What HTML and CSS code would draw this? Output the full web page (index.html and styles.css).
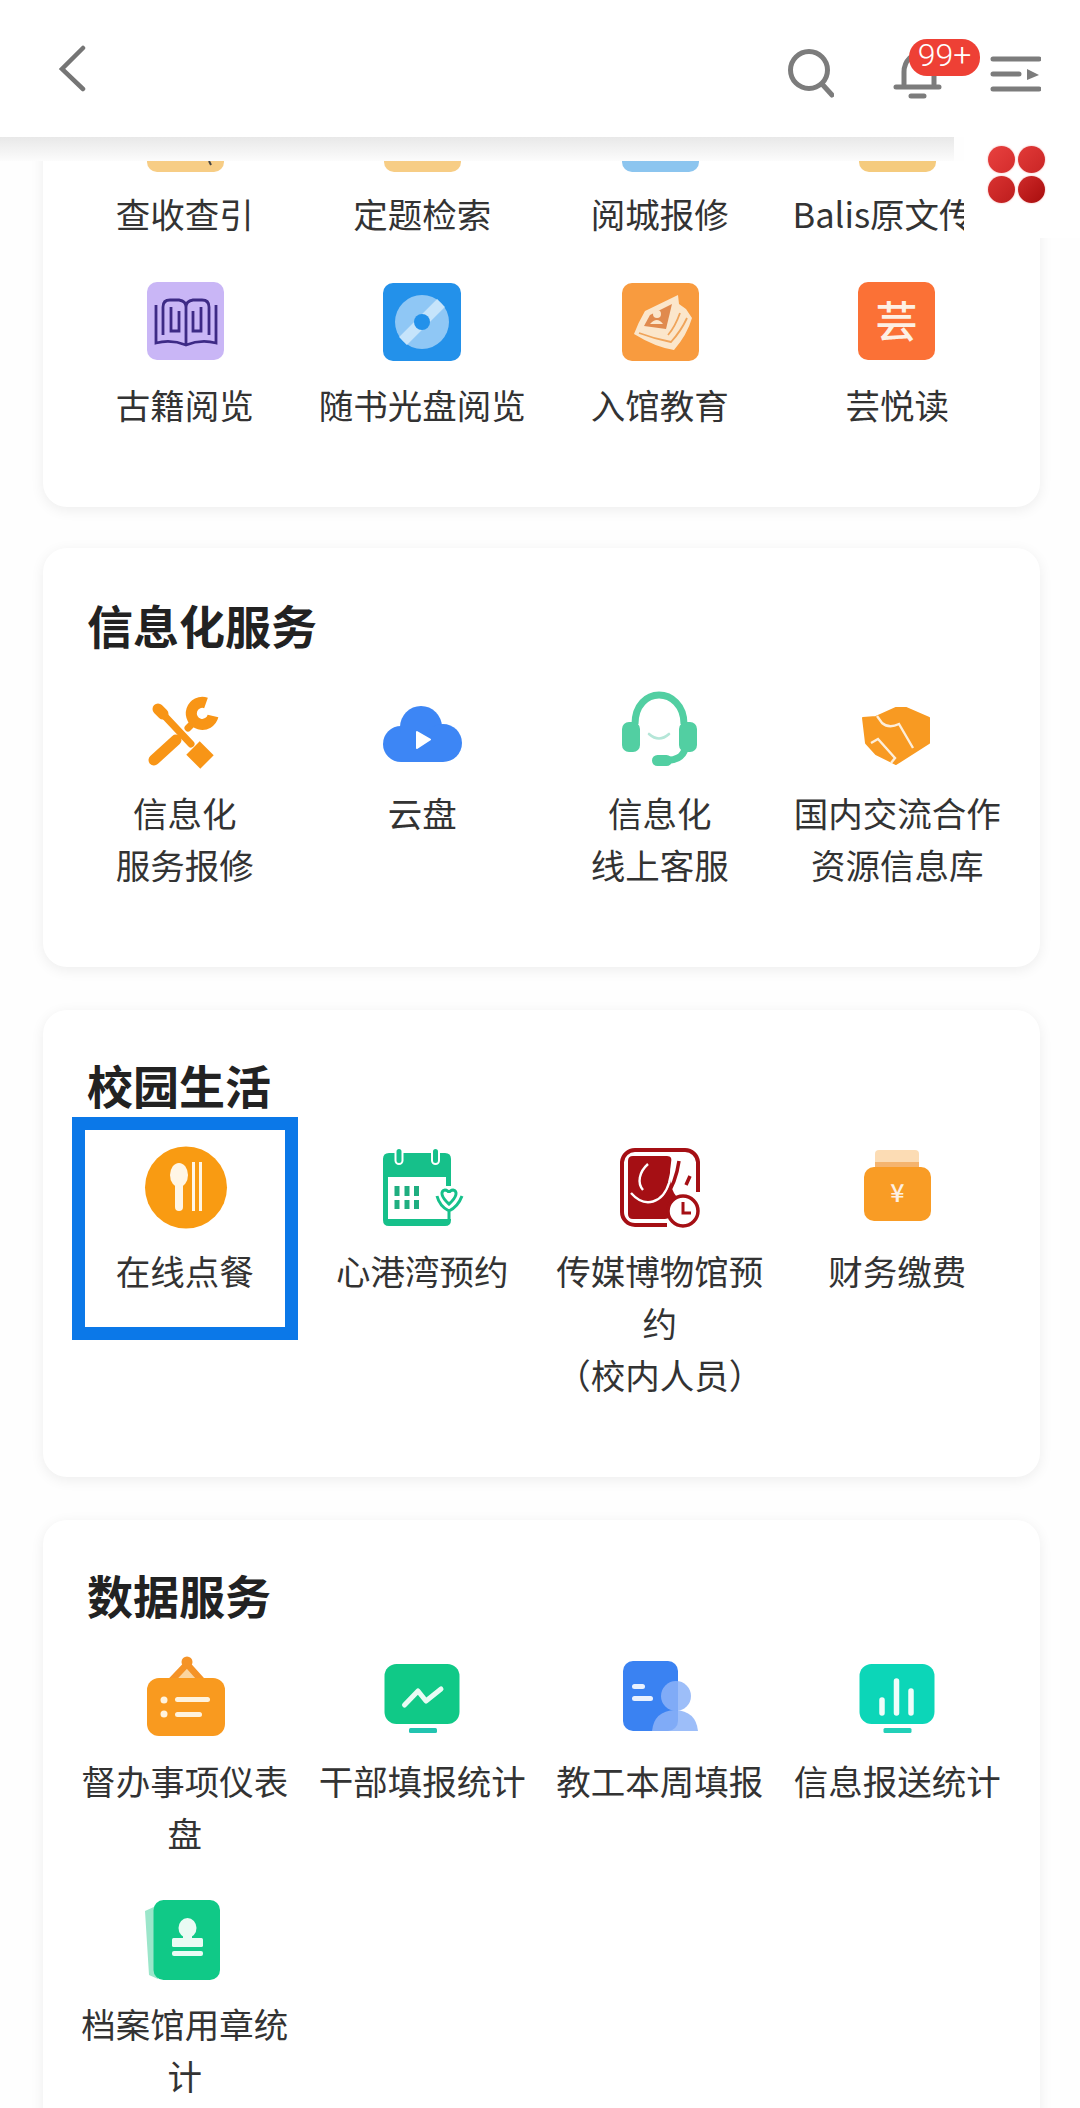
FILE: index.html
```html
<!DOCTYPE html>
<html lang="zh-CN">

<head>
    <meta charset="utf-8">
    <title>服务大厅</title>
    <link rel="stylesheet" href="styles.css">
</head>

<body>
    <header class="topbar">
        <svg class="back" width="30" height="50" viewBox="0 0 30 50"><path d="M26 3 L5 24 L26 44" /></svg>
        <div class="actions">
            <svg class="search" width="46" height="55" viewBox="0 0 46 55"><circle cx="21" cy="25" r="18.5" /><path d="M34 39 L44 50" /></svg>
            <div class="bell">
                <svg width="50" height="55" viewBox="0 0 50 55"><path d="M12 39 V27 C12 15 21 9 29 7 M42 30 V39 M4 42 H47 M19 51 H32" /></svg>
                <span class="badge">99+</span>
            </div>
            <svg class="menu" width="52" height="50" viewBox="0 0 52 50"><path d="M4 14 H50 M4 29 H30 M4 44 H50" /><path class="fill" d="M38 24 L50 30 L38 35 Z" /></svg>
        </div>
    </header>
    <div class="shade"></div>
    <div class="float-btn">
        <div class="dots"><i></i><i></i><i></i><i></i></div>
    </div>

    <main class="scroller">
        <div class="scroll-inner">
            <section class="card card-first">
                <div class="grid">
                    <div class="cell">
                        <svg class="icon" viewBox="0 0 78 78"><rect x="1" y="2" width="77" height="78" rx="10" fill="#f7cd85" /><path d="M63 69 L65 73" stroke="#444" stroke-width="2" /></svg>
                        <p class="label">查收查引</p>
                    </div>
                    <div class="cell">
                        <svg class="icon" viewBox="0 0 78 78"><rect x="1" y="2" width="77" height="78" rx="10" fill="#f7cd85" /></svg>
                        <p class="label">定题检索</p>
                    </div>
                    <div class="cell">
                        <svg class="icon" viewBox="0 0 78 78"><rect x="1" y="2" width="77" height="78" rx="10" fill="#8cc5ef" /></svg>
                        <p class="label">阅城报修</p>
                    </div>
                    <div class="cell">
                        <svg class="icon" viewBox="0 0 78 78"><rect x="1" y="2" width="77" height="78" rx="10" fill="#f5cb7e" /></svg>
                        <p class="label label-nowrap">Balis原文传</p>
                    </div>

                    <div class="cell">
                        <svg class="icon" viewBox="0 0 78 78">
                            <rect x="1" y="-1" width="77" height="78" rx="10" fill="#c9b6f6" />
                            <path d="M10 22 V60 Q25 56 40 62 Q55 56 70 60 V22 M17 52 V24 Q17 17 24 17 H33 Q40 18 40 24 V61 M63 52 V24 Q63 17 56 17 H47 Q40 18 40 24 M25 24 V48 H33 V28 M55 24 V48 H47 V28" fill="none" stroke="#3d2a86" stroke-width="2.800" />
                        </svg>
                        <p class="label">古籍阅览</p>
                    </div>
                    <div class="cell">
                        <svg class="icon" viewBox="0 0 78 78">
                            <rect width="78" height="78" rx="10" fill="#2391ea" />
                            <circle cx="39" cy="39" r="27" fill="#8fc7f5" />
                            <path d="M20 58 L58 20" stroke="#c6e4fb" stroke-width="11" />
                            <circle cx="39" cy="39" r="8" fill="#2391ea" />
                        </svg>
                        <p class="label">随书光盘阅览</p>
                    </div>
                    <div class="cell">
                        <svg class="icon" viewBox="0 0 78 78">
                            <rect x="1" width="77" height="78" rx="10" fill="#f89b3f" />
                            <path d="M24 28 L57 12 L58 21 L65 26 L71 35 Q66 52 53 67 Q34 64 13 51 Q17 40 24 28 Z" fill="#fbe6cb" />
                            <path d="M29 32 L51 21 L45 46 L23 43 Z" fill="#e08a4e" />
                            <circle cx="36" cy="31" r="4" fill="#fbe6cb" />
                            <path d="M29 41 Q36 33 42 41 Z" fill="#fbe6cb" />
                            <path d="M18 50 Q34 56 50 59 Q60 48 66 35 M47 52 Q54 44 59 30" fill="none" stroke="#f0a45a" stroke-width="1.800" />
                        </svg>
                        <p class="label">入馆教育</p>
                    </div>
                    <div class="cell">
                        <svg class="icon" viewBox="0 0 78 78">
                            <rect y="-1" width="77" height="78" rx="10" fill="#fb7136" />
                            <text class="glyph" x="38.500" y="54" font-size="42">芸</text>
                        </svg>
                        <p class="label">芸悦读</p>
                    </div>
                </div>
            </section>

            <section class="card card-service">
                <h2 class="title">信息化服务</h2>
                <div class="grid">
                    <div class="cell">
                        <svg class="icon" viewBox="0 0 78 78">
                            <g fill="none" stroke="#f89516" stroke-linecap="round">
                                <path d="M14 20 L45 53" stroke-width="7" />
                                <path d="M12 18 L17 23" stroke-width="11" />
                                <path d="M47 57 L61 71" stroke-width="19" stroke-linecap="butt" />
                                <path d="M8 69 L30 49" stroke-width="11" />
                                <path d="M60 12 A11 11 0 1 0 67 25" stroke-width="11" stroke-linecap="butt" />
                                <path d="M46 33 L42 37" stroke-width="7" />
                            </g>
                        </svg>
                        <p class="label">信息化<br>服务报修</p>
                    </div>
                    <div class="cell">
                        <svg class="icon" viewBox="0 0 78 78">
                            <g fill="#3d86f5">
                                <circle cx="18" cy="53" r="18" />
                                <circle cx="38" cy="36" r="21" />
                                <circle cx="60" cy="52" r="19" />
                                <rect x="18" y="42" width="42" height="29" />
                            </g>
                            <path d="M34 41 L47 48.500 L34 57 Z" fill="#fff" stroke="#fff" stroke-width="2" stroke-linejoin="round" />
                        </svg>
                        <p class="label">云盘</p>
                    </div>
                    <div class="cell">
                        <svg class="icon" viewBox="0 0 78 78">
                            <path d="M14 33 C14 14 26 4 38 4 C50 4 63 14 63 33 M64 58 C62 66 54 70 44 69" fill="none" stroke="#52cfa2" stroke-width="7" />
                            <rect x="1" y="31" width="18" height="30" rx="7" fill="#52cfa2" />
                            <rect x="58" y="31" width="18" height="30" rx="7" fill="#52cfa2" />
                            <rect x="31" y="64" width="20" height="11" rx="5.500" fill="#52cfa2" />
                            <path d="M28 43 Q38 52 48 43" fill="none" stroke="#b5e6d8" stroke-width="2.600" stroke-linecap="round" />
                        </svg>
                        <p class="label">信息化<br>线上客服</p>
                    </div>
                    <div class="cell">
                        <svg class="icon" viewBox="0 0 78 78">
                            <path d="M5 27 L18 26 L38 17 L48 17 L71 27 L71 52 L38 73 L18 63 L8 52 Z" fill="#f89a22" stroke="#f89a22" stroke-width="2" stroke-linejoin="round" />
                            <path d="M19 25 L24 32 Q31 38 41 33 L55 57 M13 52 L20 48 L37 67 L33 72" fill="none" stroke="#fdeeda" stroke-width="2.400" />
                        </svg>
                        <p class="label">国内交流合作<br>资源信息库</p>
                    </div>
                </div>
            </section>

            <section class="card">
                <h2 class="title">校园生活</h2>
                <div class="grid">
                    <div class="cell">
                        <svg class="icon" viewBox="0 0 78 78">
                            <circle cx="40" cy="38.500" r="41" fill="#f99b12" />
                            <g fill="#fff6e6">
                                <ellipse cx="33" cy="26" rx="9" ry="12" />
                                <rect x="29" y="30" width="8" height="32" rx="4" />
                                <rect x="46" y="13" width="3" height="49" />
                                <rect x="53" y="13" width="3" height="49" />
                            </g>
                        </svg>
                        <p class="label">在线点餐</p>
                        <div class="frame"></div>
                    </div>
                    <div class="cell">
                        <svg class="icon" viewBox="0 0 78 78">
                            <path d="M0 10 Q0 4 6 4 H62 Q68 4 68 10 V37 H63 V28 H5 V70 H68 V71 Q68 77 62 77 H6 Q0 77 0 71 Z" fill="#16c08a" />
                            <g fill="#16c08a" stroke="#fff" stroke-width="2">
                                <rect x="12.500" y="-1" width="7" height="16" rx="3.500" />
                                <rect x="49" y="-1" width="7" height="16" rx="3.500" />
                            </g>
                            <g fill="#1fae80">
                                <rect x="11.500" y="37" width="5" height="10" />
                                <rect x="21.500" y="37" width="5" height="10" />
                                <rect x="31" y="37" width="5" height="10" />
                                <rect x="11.500" y="51" width="5" height="9" />
                                <rect x="21.500" y="51" width="5" height="9" />
                                <rect x="31" y="51" width="5" height="9" />
                            </g>
                            <path d="M66 55 C58 48 57 42 62 41 C64 41 66 43 66 44 C66 43 68 41 70 41 C75 42 74 48 66 55 Z M54 47 C56 55 62 60 66 62 C70 60 76 55 79 47 M66 62 V70" fill="none" stroke="#16c08a" stroke-width="3" />
                        </svg>
                        <p class="label">心港湾预约</p>
                    </div>
                    <div class="cell">
                        <svg class="icon" viewBox="0 0 78 78">
                            <path d="M46 76 H14 A13 13 0 0 1 1 63 V13 A13 13 0 0 1 14 1 H64 A13 13 0 0 1 77 13 V43" fill="none" stroke="#a50f14" stroke-width="4" />
                            <path d="M7 12 Q7 7 12 7 H46 Q52 7 50 14 Q46 40 58 50 L50 62 Q50 70 44 70 H12 Q7 70 7 65 Z" fill="#a50f14" />
                            <path d="M27 15 C18 23 16 34 22 41 M10 44 C24 60 42 54 48 34 C50 26 52 18 52 9" fill="none" stroke="#fff" stroke-width="2.400" />
                            <path d="M58 12 C56 26 52 38 44 49 M69 27 L65 36" fill="none" stroke="#a50f14" stroke-width="3.500" />
                            <circle cx="62" cy="62" r="15" fill="#fff" stroke="#a50f14" stroke-width="3.500" />
                            <path d="M62 53 V64 H70" fill="none" stroke="#a50f14" stroke-width="3" />
                        </svg>
                        <p class="label">传媒博物馆预约<br>（校内人员）</p>
                    </div>
                    <div class="cell">
                        <svg class="icon" viewBox="0 0 78 78">
                            <path d="M17 18 V5 Q17 1 21 1 H57 Q61 1 61 5 V18 Z" fill="#fcdcb4" />
                            <rect x="17" y="13" width="44" height="6" fill="#f5b46e" />
                            <rect x="6" y="18" width="67" height="54" rx="10" fill="#f99c25" />
                            <text class="glyph" x="39.500" y="53" font-size="25">¥</text>
                        </svg>
                        <p class="label">财务缴费</p>
                    </div>
                </div>
            </section>

            <section class="card">
                <h2 class="title">数据服务</h2>
                <div class="grid">
                    <div class="cell">
                        <svg class="icon" viewBox="0 0 78 78">
                            <path d="M26 22 L41 7 L55 22 Z" fill="#fbd59f" />
                            <path d="M23 24 L41 5 L58 24" fill="none" stroke="#f59327" stroke-width="6.500" />
                            <circle cx="41" cy="3" r="5.500" fill="#f59327" />
                            <rect x="1" y="19" width="78" height="58" rx="12" fill="#f99a1f" />
                            <g fill="#fff3de">
                                <circle cx="18" cy="41" r="3.500" />
                                <circle cx="18" cy="55" r="3.500" />
                                <rect x="29" y="38" width="35" height="5" rx="2.500" />
                                <rect x="29" y="53" width="27" height="5" rx="2.500" />
                            </g>
                        </svg>
                        <p class="label">督办事项仪表盘</p>
                    </div>
                    <div class="cell">
                        <svg class="icon" viewBox="0 0 78 78">
                            <rect x="1.500" y="5" width="75" height="60" rx="12" fill="#10c987" />
                            <rect x="26" y="69" width="28" height="5" rx="1.500" fill="#22c4b0" />
                            <path d="M21.500 46 L35 32 L43 42 L58 30" fill="none" stroke="#e9fbf4" stroke-width="5" stroke-linecap="round" stroke-linejoin="round" />
                        </svg>
                        <p class="label">干部填报统计</p>
                    </div>
                    <div class="cell">
                        <svg class="icon" viewBox="0 0 78 78">
                            <rect x="2" y="2" width="55" height="70" rx="10" fill="#3a82f2" />
                            <rect x="11" y="25" width="13" height="5" rx="2.500" fill="#e9f1fe" />
                            <rect x="11" y="37" width="21" height="5" rx="2.500" fill="#e9f1fe" />
                            <g fill="#8db3f8" opacity="0.85">
                                <circle cx="55" cy="37" r="15" />
                                <path d="M31 72 Q33 52 54 51 Q75 52 77 72 Z" />
                            </g>
                        </svg>
                        <p class="label">教工本周填报</p>
                    </div>
                    <div class="cell">
                        <svg class="icon" viewBox="0 0 78 78">
                            <rect x="1.500" y="5" width="75" height="60" rx="12" fill="#0cd6b8" />
                            <rect x="25.500" y="69" width="28" height="5" rx="1.500" fill="#22d0b8" />
                            <path d="M24 41 V54 M38.500 22 V54 M53 32 V54" fill="none" stroke="#f0fdfa" stroke-width="5.500" stroke-linecap="round" />
                        </svg>
                        <p class="label">信息报送统计</p>
                    </div>
                    <div class="cell">
                        <svg class="icon" viewBox="0 0 78 78">
                            <path d="M10 4 L-1 9 L3 73 L12 77 Z" fill="#9be6ca" />
                            <rect x="7.500" y="-2" width="66.500" height="80" rx="10" fill="#10c987" />
                            <g fill="#eafbf4">
                                <ellipse cx="41.500" cy="26" rx="9" ry="10" />
                                <rect x="37" y="29" width="9" height="9" />
                                <rect x="26" y="36" width="31" height="9" rx="1.500" />
                                <rect x="26" y="49" width="31" height="5" rx="2" />
                            </g>
                        </svg>
                        <p class="label">档案馆用章统计</p>
                    </div>
                </div>
            </section>
        </div>
    </main>
</body>
</html>
```

FILE: styles.css
```css
html,
body {
    height: 100%;
    margin: 0;
    overflow: hidden;
}

body {
    display: flex;
    flex-direction: column;
    position: relative;
    background: #fefefe;
    color: #333;
    font-family: "Noto Sans CJK SC", "Noto Sans", sans-serif;
}

/* top bar */
.topbar {
    display: flex;
    justify-content: space-between;
    flex: none;
    box-sizing: border-box;
    height: 137px;
    padding: 45px 39px 0 57px;
    background: #fff;
}

.topbar svg path,
.topbar svg circle {
    fill: none;
    stroke: #7c7c7c;
    stroke-width: 5;
    stroke-linecap: round;
}

.topbar .back path {
    stroke: #757575;
    stroke-width: 4.5;
}

.topbar .menu .fill {
    fill: #7c7c7c;
    stroke: none;
}

.actions {
    display: flex;
    gap: 47px;
}

.search {
    margin-right: 11px;
}

.bell {
    position: relative;
    width: 50px;
    height: 55px;
}

.badge {
    position: absolute;
    top: -6px;
    left: 17px;
    width: 71px;
    height: 37px;
    border-radius: 18px;
    background: #ee4035;
    color: #fff;
    font-family: Roboto, sans-serif;
    font-size: 32px;
    font-weight: 300;
    line-height: 33px;
    text-align: center;
}

.shade {
    flex: none;
    height: 24px;
    margin-right: 126px;
    background: linear-gradient(#e8e8e8, #fcfcfc);
}

/* floating button */
.float-btn {
    position: absolute;
    top: 137px;
    right: 0;
    z-index: 2;
    display: flex;
    box-sizing: border-box;
    width: 116px;
    height: 101px;
    padding: 9px 0 0 24px;
    background: #fff;
}

.dots {
    display: grid;
    grid-template-columns: 27px 27px;
    grid-auto-rows: 27px;
    gap: 3px;
}

.dots i {
    border-radius: 50%;
    background: linear-gradient(135deg, #e8413f, #d42c2c);
    box-shadow: 0 0 2px #f2a0a0;
}

.dots i:nth-child(2) {
    background: linear-gradient(135deg, #e23a38, #c92525);
}

.dots i:nth-child(3) {
    background: linear-gradient(135deg, #d93231, #bd1d1d);
}

.dots i:nth-child(4) {
    background: linear-gradient(135deg, #cf2a2a, #a80d0d);
}

/* cards */
.scroller {
    flex: 1;
    min-height: 0;
    overflow: hidden;
}

.scroll-inner {
    margin-top: -69px;
}

.card {
    margin: 0 40px 43px 43px;
    padding: 44px 0 76px;
    background: #fff;
    border-radius: 24px;
    box-shadow: 0 3px 14px rgba(0, 0, 0, 0.07);
}

.card-first {
    padding-top: 0;
    margin-bottom: 41px;
}

.card-service {
    padding-top: 46px;
}

.card-service .grid {
    padding-top: 2px;
}

.title {
    margin: 0 0 35px;
    padding-left: 44px;
    color: #222;
    font-size: 46px;
    font-weight: 700;
    line-height: 60px;
}

.grid {
    display: grid;
    grid-template-columns: repeat(4, 1fr);
    row-gap: 43px;
    padding: 0 24px 0 23px;
}

.cell {
    position: relative;
    display: flex;
    flex-direction: column;
    align-items: center;
    box-sizing: border-box;
    padding: 0 14px;
}

.icon {
    display: block;
    flex: none;
    width: 78px;
    height: 78px;
    overflow: visible;
}

.glyph {
    fill: #fdf0e4;
    font-weight: 500;
    text-anchor: middle;
}

.label {
    width: 100%;
    margin: 17px 0 1px;
    font-size: 34.500px;
    line-height: 52px;
    text-align: center;
}

.label-nowrap {
    text-align: left;
    white-space: nowrap;
}

/* blue highlight drawn around the first cell of 校园生活 */
.frame {
    position: absolute;
    top: -32px;
    left: 6px;
    box-sizing: border-box;
    width: 226px;
    height: 223px;
    border: 13px solid #0b78e8;
    pointer-events: none;
}
```
